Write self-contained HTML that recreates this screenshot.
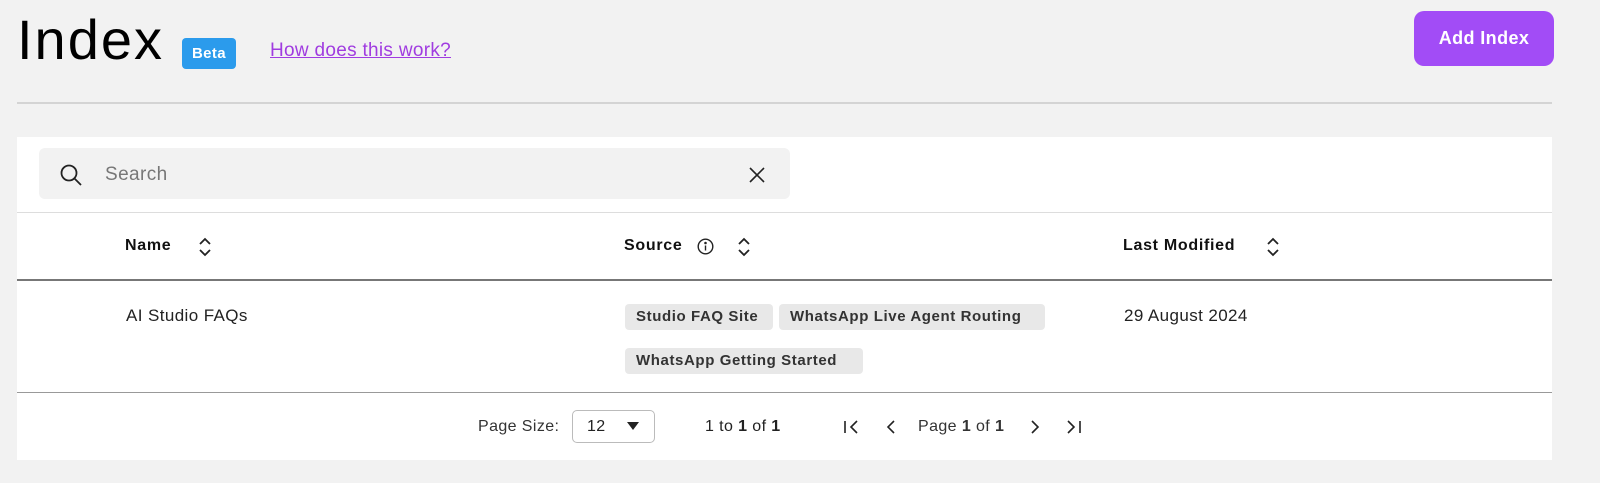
<!DOCTYPE html><html><head><style>
body{margin:0;width:1600px;height:483px;background:#f2f2f2;font-family:"Liberation Sans",sans-serif;position:relative;overflow:hidden;color:#111;letter-spacing:.4px}
.a{position:absolute}
.chip{position:absolute;background:#e8e8e8;border-radius:4px;height:26px;line-height:26px;padding:0 11px;font-size:15px;font-weight:bold;color:#333;box-sizing:border-box;letter-spacing:.6px}
.h{position:absolute;top:237px;font-size:16px;font-weight:bold;color:#111;letter-spacing:.7px}
</style></head><body>
<div class="a" style="left:17px;top:8px;font-size:56px;line-height:64px;color:#000;letter-spacing:2px">Index</div>
<div class="a" style="left:182px;top:38px;width:54px;height:31px;background:#2b9bec;border-radius:4px;color:#fff;font-weight:bold;font-size:15px;line-height:31px;text-align:center">Beta</div>
<div class="a" style="left:270px;top:40px;font-size:19px;color:#a03ce0;text-decoration:underline;letter-spacing:.3px">How does this work?</div>
<div class="a" style="left:1414px;top:11px;width:140px;height:55px;background:#a24cf6;border-radius:10px;color:#fff;font-weight:bold;font-size:18px;line-height:55px;text-align:center">Add Index</div>
<div class="a" style="left:17px;top:102px;width:1535px;height:2px;background:#d4d4d4"></div>
<div class="a" style="left:17px;top:137px;width:1535px;height:323px;background:#fff"></div>
<div class="a" style="left:39px;top:148px;width:751px;height:51px;background:#f2f2f2;border-radius:6px"></div>
<svg class="a" style="left:59px;top:163px" width="24" height="24" viewBox="0 0 24 24" fill="none" stroke="#222" stroke-width="1.8"><circle cx="10" cy="10" r="7.5"/><path d="M15.5 15.5L22 22"/></svg>
<div class="a" style="left:105px;top:164px;font-size:19px;color:#777">Search</div>
<svg class="a" style="left:749px;top:167px" width="16" height="16" viewBox="0 0 16 16" stroke="#222" stroke-width="1.6"><path d="M1 1L15 15M15 1L1 15"/></svg>
<div class="a" style="left:17px;top:212px;width:1535px;height:1px;background:#ddd"></div>
<div class="h" style="left:125px">Name</div>
<div class="h" style="left:624px">Source</div>
<div class="h" style="left:1123px">Last Modified</div>
<svg class="a" style="left:697px;top:238px" width="17" height="17" viewBox="0 0 17 17" fill="none" stroke="#222" stroke-width="1.4"><circle cx="8.5" cy="8.5" r="7.3"/><path d="M8.5 7.5V12.5"/><circle cx="8.5" cy="5" r=".6" fill="#222"/></svg>
<svg class="a" style="left:198px;top:236px" width="14" height="22" viewBox="0 0 14 22" fill="none" stroke="#222" stroke-width="1.8"><path d="M2 8L7 3L12 8M2 14L7 19L12 14"/></svg>
<svg class="a" style="left:737px;top:236px" width="14" height="22" viewBox="0 0 14 22" fill="none" stroke="#222" stroke-width="1.8"><path d="M2 8L7 3L12 8M2 14L7 19L12 14"/></svg>
<svg class="a" style="left:1266px;top:236px" width="14" height="22" viewBox="0 0 14 22" fill="none" stroke="#222" stroke-width="1.8"><path d="M2 8L7 3L12 8M2 14L7 19L12 14"/></svg>
<div class="a" style="left:17px;top:279px;width:1535px;height:2px;background:#777"></div>
<div class="a" style="left:126px;top:306px;font-size:17px;color:#222">AI Studio FAQs</div>
<div class="a" style="left:1124px;top:306px;font-size:17px;color:#222">29 August 2024</div>
<div class="chip" style="left:625px;top:304px;width:148px">Studio FAQ Site</div>
<div class="chip" style="left:779px;top:304px;width:266px">WhatsApp Live Agent Routing</div>
<div class="chip" style="left:625px;top:348px;width:238px">WhatsApp Getting Started</div>
<div class="a" style="left:17px;top:392px;width:1535px;height:1px;background:#999"></div>
<div class="a" style="left:478px;top:418px;font-size:16px;color:#333">Page Size:</div>
<div class="a" style="left:572px;top:410px;width:83px;height:33px;border:1px solid #bbb;border-radius:5px;box-sizing:border-box"></div>
<div class="a" style="left:587px;top:418px;font-size:16px;color:#222">12</div>
<svg class="a" style="left:627px;top:421px" width="12" height="10"><path d="M0 1H12L6 9Z" fill="#222"/></svg>
<div class="a" style="left:705px;top:418px;font-size:16px;color:#222">1 to <b>1</b> of <b>1</b></div>
<svg class="a" style="left:843px;top:419px" width="80" height="16" fill="none" stroke="#222" stroke-width="1.6"><path d="M2 2V14M14 2L8 8L14 14"/><path d="M51 2L45 8L51 14"/></svg>
<div class="a" style="left:918px;top:418px;font-size:16px;color:#333">Page <b>1</b> of <b>1</b></div>
<svg class="a" style="left:1028px;top:419px" width="60" height="16" fill="none" stroke="#222" stroke-width="1.6"><path d="M4 2L10 8L4 14"/><path d="M40 2L46 8L40 14M52 2V14"/></svg>
</body></html>
